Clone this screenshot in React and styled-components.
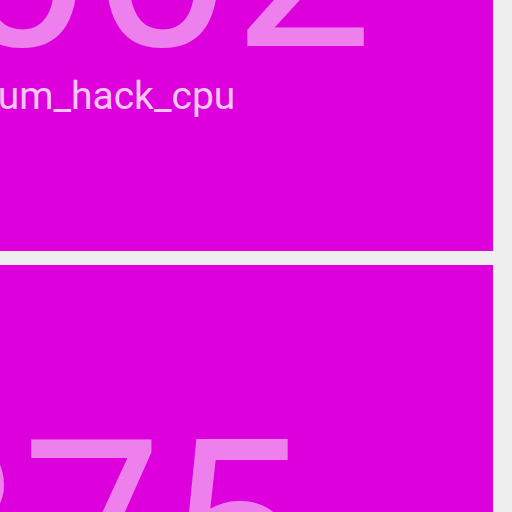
import React from 'react';
import styled, { createGlobalStyle } from 'styled-components';

const GlobalStyle = createGlobalStyle`
  html, body {
    margin: 0;
    padding: 0;
    background: #eeeeee;
    overflow: hidden;
    font-family: Roboto, "Liberation Sans", sans-serif;
  }
`;

// the screenshot is a scrolled view of a wider dashboard, so the grid is offset
const Board = styled.div`
  display: grid;
  grid-template-columns: 802px;
  gap: 14px;
  margin: -307px 0 0 -309px;
`;

const Tile = styled.div`
  display: flex;
  flex-direction: column;
  align-items: center;
  height: 558px;
  box-sizing: border-box;
  padding-top: 158px;
  background: ${p => p.$bg || '#dd00dd'};
  color: #fff;
  text-align: center;
`;

const Value = styled.div`
  font-size: 250px;
  line-height: 220px;
  font-weight: 400;
  color: rgba(255, 255, 255, 0.5);
`;

const Label = styled.div`
  margin-top: 2px;
  font-size: 39px;
  line-height: 1.2;
  color: rgba(255, 255, 255, 0.8);
`;

const tiles = [
  { value: '1002', label: 'forum_hack_cpu' },
  { value: '875', label: 'forum_hack_mem' },
];

export default function App() {
  return (
    <>
      <GlobalStyle />
      <Board>
        {tiles.map(t => (
          <Tile key={t.label}>
            <Value>{t.value}</Value>
            <Label>{t.label}</Label>
          </Tile>
        ))}
      </Board>
    </>
  );
}
